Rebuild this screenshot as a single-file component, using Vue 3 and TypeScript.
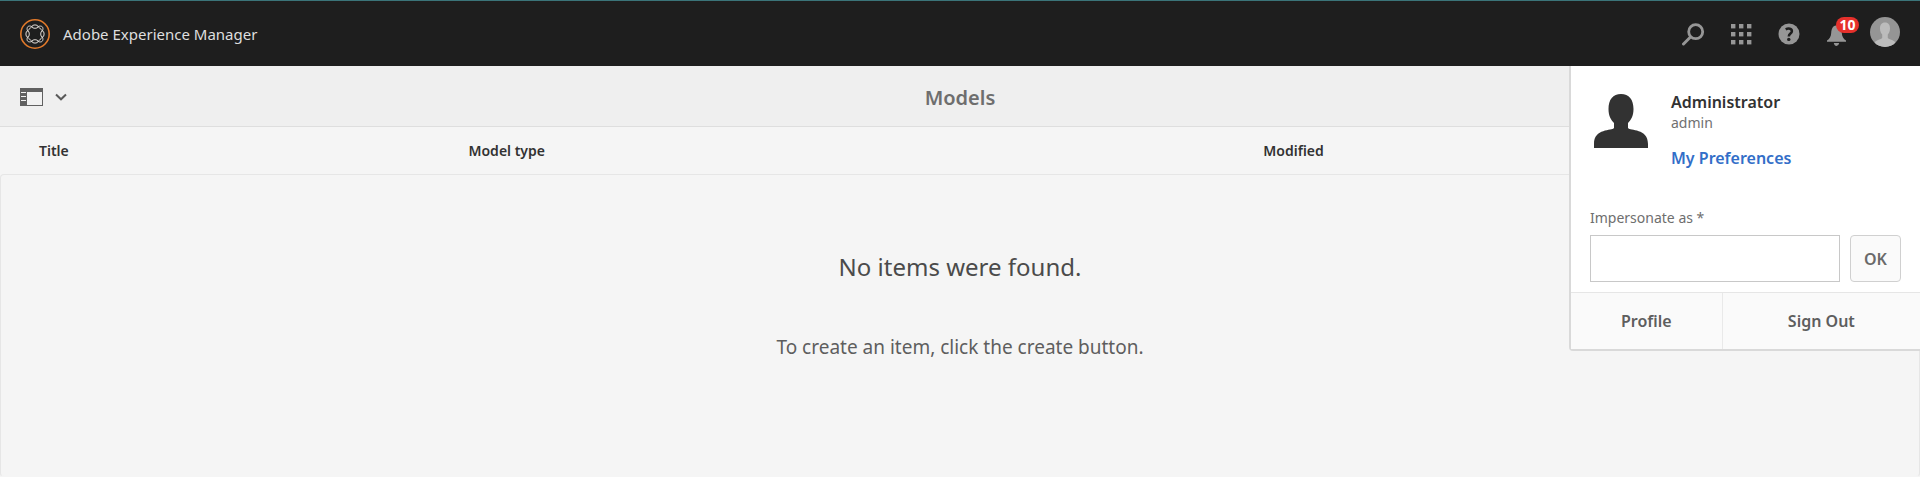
<script setup lang="ts">
import { ref } from 'vue'

interface Column {
  key: string
  label: string
}

const columns: Column[] = [
  { key: 'title', label: 'Title' },
  { key: 'type', label: 'Model type' },
  { key: 'modified', label: 'Modified' },
]

const dots: number[] = [2, 10, 18]
const quarters: number[] = [0, 90, 180, 270]
const notifications = ref<number>(10)
const impersonate = ref<string>('')
const menuOpen = ref<boolean>(true)
</script>

<template>
  <div class="shell">
    <header class="topbar">
      <a class="brand" href="#">
        <svg class="brand-icon" viewBox="0 0 30 30" aria-hidden="true">
          <circle cx="15" cy="15" r="14.2" fill="none" stroke="#e27a2b" stroke-width="1.6" />
          <g v-for="angle in quarters" :key="angle" :transform="`rotate(${angle} 15 15)`" fill="none" stroke="#ded9d4" stroke-width="1">
            <ellipse cx="15" cy="7.6" rx="3" ry="1.7" />
            <path d="M18 7.600C19.500 6.800 21.500 7 22.300 7.800S23.200 10.500 22.400 12M18 7.600C19 9.200 20.200 9.200 20.600 9.500S20.800 11 22.400 12" />
          </g>
        </svg>
        <span>Adobe Experience Manager</span>
      </a>
      <nav class="tools" aria-label="Tools">
        <button class="tool" type="button" aria-label="Search">
          <svg width="24" height="24" viewBox="0 0 24 24" fill="none" stroke="#969696">
            <circle cx="14.7" cy="9.7" r="7" stroke-width="2.8" />
            <path d="M9.5 15L2.5 22" stroke-width="3" stroke-linecap="round" />
          </svg>
        </button>
        <button class="tool" type="button" aria-label="Solutions">
          <svg width="24" height="24" viewBox="0 0 24 24" fill="#969696">
            <template v-for="y in dots" :key="y">
              <rect v-for="x in dots" :key="x" :x="x" :y="y" width="4.4" height="4.4" />
            </template>
          </svg>
        </button>
        <button class="tool" type="button" aria-label="Help">
          <svg width="24" height="24" viewBox="0 0 24 24">
            <circle cx="12" cy="12" r="10.5" fill="#969696" />
            <path d="M8.7 7.4C11.5 5.8 14.9 6.6 14.9 9.2C14.9 11.6 11.8 11.5 11.8 14.4" fill="none" stroke="#1e1e1e" stroke-width="2.5" />
            <circle cx="11.8" cy="17.4" r="1.7" fill="#1e1e1e" />
          </svg>
        </button>
        <button class="tool" type="button" aria-label="Notifications">
          <svg width="24" height="24" viewBox="0 0 24 24" fill="#969696">
            <path d="M11 3.5C15 4 16.5 7 16.8 11C17 15 18.5 16.7 21 18.6V19.8H2V18.6C4.5 16.7 6 15 6.2 11C6.500 7 7.500 4 11 3.500ZM8.800 21H14.200Q13.600 24 11.500 24T8.800 21Z" />
          </svg>
          <span class="badge">{{ notifications }}</span>
        </button>
        <button class="tool user" type="button" aria-label="User" :aria-expanded="menuOpen" @click="menuOpen = !menuOpen">
          <svg width="30" height="30" viewBox="0 0 30 30">
            <defs><clipPath id="user-clip"><circle cx="15" cy="15" r="15" /></clipPath></defs>
            <g clip-path="url(#user-clip)">
              <rect width="30" height="30" fill="#959595" />
              <path d="M15 5.500C18.500 5.500 20 8 20 11.500C20 14.500 18.800 16.300 17.800 17.500V21C20 23 25.500 22.500 26 28V30H4V28C4.500 22.500 10 23 12.200 21V17.500C11.200 16.300 10 14.500 10 11.500C10 8 11.500 5.500 15 5.500Z" fill="#bcbcbc" />
            </g>
          </svg>
        </button>
      </nav>
    </header>

    <div class="actionbar">
      <button class="rail" type="button" aria-label="Toggle side panel">
        <svg width="23" height="18" viewBox="0 0 23 18">
          <rect width="23" height="18" fill="#606060" />
          <rect x="7" y="4" width="15" height="13" fill="#f1f1f1" />
          <path d="M1 4.500H6M1 8.500H6M1 12.500H6" stroke="#f1f1f1" />
        </svg>
        <svg width="12" height="8" viewBox="0 0 12 8" fill="none" stroke="#5a5a5a" stroke-width="2">
          <path d="M1 1.500L6 6.300L11 1.500" />
        </svg>
      </button>
      <h1>Models</h1>
    </div>

    <main class="content">
      <table>
        <thead>
          <tr>
            <th v-for="column in columns" :key="column.key" :class="column.key" scope="col">{{ column.label }}</th>
          </tr>
        </thead>
      </table>
      <section class="empty">
        <h2>No items were found.</h2>
        <p>To create an item, click the create button.</p>
      </section>
    </main>

    <aside v-if="menuOpen" class="menu">
      <div class="profile">
        <svg width="54" height="54" viewBox="0 0 54 54" aria-hidden="true">
          <path d="M27 0C35 0 39.500 5.500 39.500 15C39.500 22 37 26 34 29V34C36 37 54 34 54 50V54H0V50C0 34 18 37 20 34V29C17 26 14.500 22 14.500 15C14.500 5.500 19 0 27 0Z" fill="#323232" />
        </svg>
        <div class="identity">
          <strong>Administrator</strong>
          <span>admin</span>
          <a href="#">My Preferences</a>
        </div>
      </div>
      <form class="impersonate" @submit.prevent>
        <label for="impersonate">Impersonate as *</label>
        <div class="field">
          <input id="impersonate" v-model="impersonate" type="text" />
          <button type="submit">OK</button>
        </div>
      </form>
      <div class="links">
        <a href="#">Profile</a>
        <a href="#">Sign Out</a>
      </div>
    </aside>
  </div>
</template>

<style>
body {
  margin: 0;
  background: #f5f5f5;
}
</style>

<style scoped>
.shell {
  position: relative;
  display: flex;
  flex-direction: column;
  min-height: 100vh;
  overflow: hidden;
  background: #f5f5f5;
  color: #4b4b4b;
  font-family: "Noto Sans", "Open Sans", sans-serif;
}

.shell *,
.shell {
  box-sizing: border-box;
}

button,
input {
  margin: 0;
  font: inherit;
}

a {
  color: inherit;
  text-decoration: none;
}

.topbar {
  display: flex;
  align-items: center;
  justify-content: space-between;
  height: 66px;
  padding: 0 20px;
  border-top: 1px solid #3b7479;
  background: #1e1e1e;
}

.brand {
  display: flex;
  align-items: center;
  gap: 13px;
  color: #dedede;
  font-size: 15px;
}

.brand-icon {
  width: 30px;
  height: 30px;
}

.tools {
  display: flex;
  align-items: center;
  gap: 24px;
}

.tool {
  position: relative;
  display: flex;
  padding: 0;
  border: 0;
  background: none;
}

.tool.user {
  margin-left: -3px;
  padding-bottom: 3px;
}

.badge {
  position: absolute;
  top: -5px;
  left: 11px;
  width: 23px;
  border-radius: 8px;
  background: #e6302b;
  color: #fff;
  font-size: 14px;
  font-weight: 700;
  line-height: 16px;
  text-align: center;
}

.actionbar {
  display: grid;
  grid-template-columns: 1fr auto 1fr;
  align-items: center;
  height: 61px;
  padding: 2px 20px 0;
  border-bottom: 1px solid #dedede;
  background: #efefef;
}

.rail {
  display: flex;
  align-items: center;
  justify-self: start;
  gap: 12px;
  padding: 0;
  border: 0;
  background: none;
}

h1 {
  margin: 0;
  color: #6e6e6e;
  font-size: 20px;
  font-weight: 600;
}

.content {
  display: flex;
  flex: 1;
  flex-direction: column;
}

table {
  width: 100%;
  border-collapse: collapse;
  table-layout: fixed;
}

th {
  height: 47px;
  padding: 0;
  color: #323232;
  font-size: 14px;
  font-weight: 600;
  text-align: left;
}

.title {
  width: 24.4%;
  padding-left: 39px;
}

.type {
  width: 41.4%;
}

.empty {
  display: flex;
  flex: 1;
  flex-direction: column;
  align-items: center;
  gap: 48px;
  padding-top: 74px;
  border: 1px solid #e6e6e6;
  border-bottom-color: #f5f5f5;
  border-radius: 4px;
}

.empty h2 {
  margin: 0;
  color: #4b4b4b;
  font-size: 24px;
  font-weight: 400;
  line-height: 36px;
}

.empty p {
  margin: 0;
  color: #5e5e5e;
  font-size: 19px;
  font-weight: 400;
  line-height: 28px;
}

.menu {
  position: absolute;
  top: 66px;
  right: 0;
  width: 351px;
  border: solid #d9d9d9;
  border-width: 0 0 2px 2px;
  border-bottom-left-radius: 4px;
  background: #fff;
}

.profile {
  display: flex;
  gap: 23px;
  padding: 28px 23px 0;
}

.identity {
  display: flex;
  flex-direction: column;
  align-items: flex-start;
  margin-top: -4px;
  font-size: 16px;
  line-height: 24px;
}

.identity strong {
  color: #323232;
  font-weight: 600;
}

.identity span {
  margin-bottom: 14px;
  color: #707070;
  font-size: 14px;
  line-height: 18px;
}

.identity a {
  color: #326ec8;
  font-weight: 600;
}

.impersonate {
  padding: 38px 19px 10px;
}

.impersonate label {
  display: block;
  margin-bottom: 7px;
  color: #6e6e6e;
  font-size: 14px;
  line-height: 20px;
}

.field {
  display: flex;
  gap: 10px;
}

.field input {
  flex: 1;
  min-width: 0;
  height: 47px;
  padding: 0 12px;
  border: 1px solid #c8c8c8;
  border-radius: 0;
  background: #fff;
}

.field button {
  width: 51px;
  height: 47px;
  padding: 0;
  border: 1px solid #d0d0d0;
  border-radius: 4px;
  background: #fafafa;
  color: #6a6a6a;
  font-size: 16px;
  font-weight: 600;
}

.links {
  display: grid;
  grid-template-columns: 10fr 13fr;
  border-top: 1px solid #e6e6e6;
  background: #fafafa;
  color: #5e5e5e;
  font-size: 16px;
  font-weight: 600;
  line-height: 56px;
  text-align: center;
}

.links a:first-child {
  border-right: 1px solid #e9e9e9;
}
</style>
